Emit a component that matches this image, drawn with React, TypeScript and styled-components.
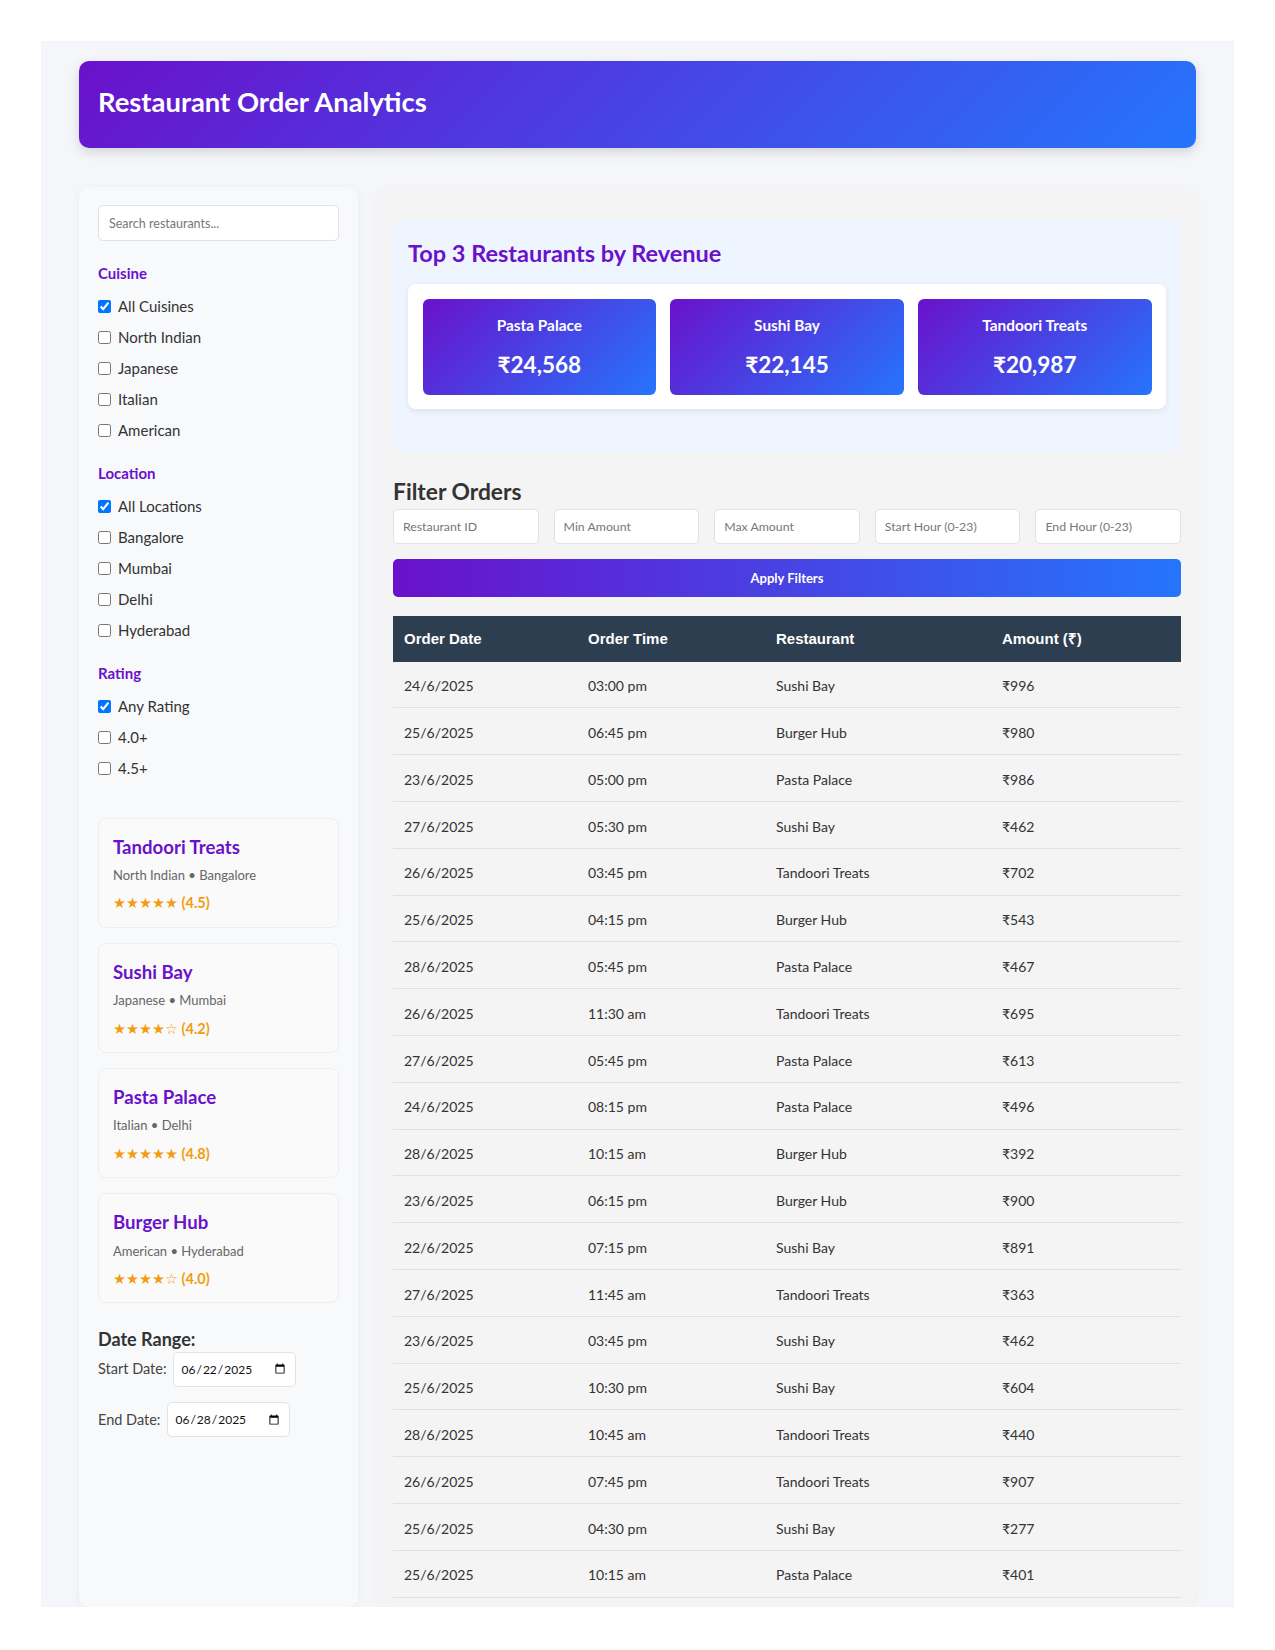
import React from "react";
import styled, { createGlobalStyle } from "styled-components";

const GlobalStyle = createGlobalStyle`
  html, body { margin: 0; padding: 0; background: #ffffff; }
  body { font-family: Lato, "Noto Sans", sans-serif; color: #333; }
  *, *::before, *::after { box-sizing: border-box; }
`;

const Page = styled.div`
  padding: 41px;
`;

const Shell = styled.div`
  height: 1566px;
  background: #f4f6f9;
  padding: 20px 38px 0;
  display: flex;
  flex-direction: column;
  overflow: hidden;
`;

const Header = styled.header`
  flex-shrink: 0;
  height: 87px;
  border-radius: 10px;
  background: linear-gradient(135deg, #6a11cb 0%, #2575fc 100%);
  box-shadow: 0 4px 12px rgba(0, 0, 0, 0.14);
  display: flex;
  align-items: center;
  padding: 0 19px;
`;

const Title = styled.h1`
  margin: 0 0 5px;
  color: #fff;
  font: 700 27.4px/1.2 Lato, "Noto Sans", sans-serif;
`;

const Body = styled.div`
  flex: 1;
  min-height: 0;
  display: flex;
  gap: 20px;
  margin-top: 39px;
`;

const Sidebar = styled.aside`
  width: 279px;
  flex-shrink: 0;
  background: #f8f9fb;
  border-radius: 10px;
  padding: 18px 19px;
  box-shadow: 0 2px 8px rgba(0, 0, 0, 0.05);
`;

const SearchInput = styled.input`
  display: block;
  width: 100%;
  height: 36px;
  padding: 0 10px;
  border: 1px solid #e2e2e2;
  border-radius: 5px;
  background: #fff;
  font: 12.5px Lato, sans-serif;
  margin-bottom: 22px;
  &::placeholder { color: #777; }
`;

const Group = styled.div`
  display: flex;
  flex-direction: column;
  padding-bottom: 12px;
`;

const GroupTitle = styled.h3`
  margin: 0 0 13px;
  font: 700 15px/20px Lato, sans-serif;
  color: #6a11cb;
`;

const CheckRow = styled.label`
  display: flex;
  align-items: center;
  height: 20px;
  margin-bottom: 11px;
  font: 15px/20px Lato, sans-serif;
  color: #333;
`;

const Check = styled.input`
  margin: 0 7px 0 0;
  width: 13px;
  height: 13px;
`;

const RestaurantList = styled.div`
  display: flex;
  flex-direction: column;
  gap: 15px;
  margin-top: 16.5px;
`;

const RCard = styled.div`
  background: #fafafa;
  border: 1px solid #eeeeee;
  border-radius: 8px;
  padding: 15px 14px 12.3px;
`;

const RName = styled.h4`
  margin: 0 0 5.5px;
  font: 700 18.6px/27px Lato, sans-serif;
  color: #6a11cb;
`;

const RMeta = styled.div`
  font: 13px/19px Lato, sans-serif;
  color: #666;
  margin-bottom: 7.4px;
`;

const RStars = styled.div`
  font: 700 14.5px/21px Lato, sans-serif;
  color: #f39c12;
`;

const StarGlyphs = styled.span`
  font-family: "DejaVu Sans", sans-serif;
  font-weight: 400;
  font-size: 14.5px;
`;

const DateSection = styled.div`
  margin-top: 24.5px;
`;

const DateTitle = styled.h3`
  margin: 0 0 2px;
  font: 700 18px/22px Lato, sans-serif;
  color: #333;
`;

const DateRow = styled.div`
  display: flex;
  align-items: center;
  margin-bottom: 15.4px;
`;

const DateLabel = styled.label`
  font: 14.5px/20px Lato, sans-serif;
  color: #444;
  margin-right: 6px;
`;

const DateInput = styled.input`
  width: 123px;
  height: 35px;
  padding: 0 7px;
  border: 1px solid #e2e2e2;
  border-radius: 5px;
  background: #fff;
  font: 12px Lato, sans-serif;
  color: #111;
`;

const Main = styled.main`
  flex: 1;
  min-width: 0;
  background: #f4f4f4;
  border-radius: 10px;
  padding: 32px 15px 0;
  box-shadow: 0 2px 8px rgba(0, 0, 0, 0.04);
  overflow: hidden;
`;

const TopSection = styled.section`
  background: #eef5fe;
  border-radius: 10px;
  padding: 18px 15px 44px;
`;

const TopTitle = styled.h2`
  margin: 0 0 15px;
  font: 700 23.5px/32px Lato, sans-serif;
  color: #6a11cb;
`;

const TopBox = styled.div`
  background: #fff;
  border-radius: 8px;
  padding: 14.5px;
  display: grid;
  grid-template-columns: repeat(3, 1fr);
  gap: 14px;
  box-shadow: 0 2px 6px rgba(0, 0, 0, 0.08);
`;

const TopCard = styled.div`
  height: 96px;
  border-radius: 6px;
  background: linear-gradient(135deg, #6a11cb 0%, #2575fc 100%);
  color: #fff;
  text-align: center;
  padding: 16px 10px 0;
`;

const TopName = styled.div`
  font: 700 15.4px/20px Lato, sans-serif;
  margin-bottom: 14.5px;
`;

const TopValue = styled.div`
  font: 700 22.5px/32px Lato, "Noto Sans", sans-serif;
`;

const FilterTitle = styled.h2`
  margin: 24.4px 0 3.3px;
  font: 700 22.8px/28px Lato, sans-serif;
  color: #333;
`;

const FilterGrid = styled.div`
  display: grid;
  grid-template-columns: repeat(5, 1fr);
  gap: 15px;
`;

const FilterInput = styled.input`
  width: 100%;
  height: 35.3px;
  padding: 0 9px;
  border: 1px solid #e2e2e2;
  border-radius: 5px;
  background: #fff;
  font: 12.3px Lato, sans-serif;
  &::placeholder { color: #777; }
`;

const ApplyButton = styled.button`
  display: block;
  width: 100%;
  height: 38.7px;
  margin-top: 14.7px;
  border: none;
  border-radius: 5px;
  background: linear-gradient(90deg, #6a11cb 0%, #2575fc 100%);
  color: #fff;
  font: 700 13px Lato, sans-serif;
`;

const Table = styled.table`
  width: 100%;
  margin-top: 18.3px;
  border-collapse: collapse;
  table-layout: fixed;
`;

const Th = styled.th<{ $w?: number }>`
  width: ${(p) => (p.$w ? `${p.$w}px` : "auto")};
  background: #2c3e50;
  color: #fff;
  text-align: left;
  padding: 12px 11px;
  font: 700 15px/22px "Liberation Sans", Arial, sans-serif;
`;

const Td = styled.td`
  padding: 13.5px 11px 10.5px;
  font: 14px/21.8px Lato, "Noto Sans", sans-serif;
  color: #333;
  border-bottom: 1px solid #e0e0e0;
`;

const cuisines = ["All Cuisines", "North Indian", "Japanese", "Italian", "American"];
const locations = ["All Locations", "Bangalore", "Mumbai", "Delhi", "Hyderabad"];
const ratings = ["Any Rating", "4.0+", "4.5+"];

const restaurants = [
  { name: "Tandoori Treats", meta: "North Indian • Bangalore", stars: "★★★★★", rating: "4.5" },
  { name: "Sushi Bay", meta: "Japanese • Mumbai", stars: "★★★★☆", rating: "4.2" },
  { name: "Pasta Palace", meta: "Italian • Delhi", stars: "★★★★★", rating: "4.8" },
  { name: "Burger Hub", meta: "American • Hyderabad", stars: "★★★★☆", rating: "4.0" },
];

const top3 = [
  { name: "Pasta Palace", value: "₹24,568" },
  { name: "Sushi Bay", value: "₹22,145" },
  { name: "Tandoori Treats", value: "₹20,987" },
];

const orders: [string, string, string, string][] = [
  ["24/6/2025", "03:00 pm", "Sushi Bay", "₹996"],
  ["25/6/2025", "06:45 pm", "Burger Hub", "₹980"],
  ["23/6/2025", "05:00 pm", "Pasta Palace", "₹986"],
  ["27/6/2025", "05:30 pm", "Sushi Bay", "₹462"],
  ["26/6/2025", "03:45 pm", "Tandoori Treats", "₹702"],
  ["25/6/2025", "04:15 pm", "Burger Hub", "₹543"],
  ["28/6/2025", "05:45 pm", "Pasta Palace", "₹467"],
  ["26/6/2025", "11:30 am", "Tandoori Treats", "₹695"],
  ["27/6/2025", "05:45 pm", "Pasta Palace", "₹613"],
  ["24/6/2025", "08:15 pm", "Pasta Palace", "₹496"],
  ["28/6/2025", "10:15 am", "Burger Hub", "₹392"],
  ["23/6/2025", "06:15 pm", "Burger Hub", "₹900"],
  ["22/6/2025", "07:15 pm", "Sushi Bay", "₹891"],
  ["27/6/2025", "11:45 am", "Tandoori Treats", "₹363"],
  ["23/6/2025", "03:45 pm", "Sushi Bay", "₹462"],
  ["25/6/2025", "10:30 pm", "Sushi Bay", "₹604"],
  ["28/6/2025", "10:45 am", "Tandoori Treats", "₹440"],
  ["26/6/2025", "07:45 pm", "Tandoori Treats", "₹907"],
  ["25/6/2025", "04:30 pm", "Sushi Bay", "₹277"],
  ["25/6/2025", "10:15 am", "Pasta Palace", "₹401"],
];

function CheckGroup({ title, items }: { title: string; items: string[] }) {
  return (
    <Group>
      <GroupTitle>{title}</GroupTitle>
      {items.map((it, i) => (
        <CheckRow key={it}>
          <Check type="checkbox" defaultChecked={i === 0} />
          {it}
        </CheckRow>
      ))}
    </Group>
  );
}

export default function App() {
  return (
    <>
      <GlobalStyle />
      <Page>
        <Shell>
          <Header>
            <Title>Restaurant Order Analytics</Title>
          </Header>
          <Body>
            <Sidebar>
              <SearchInput placeholder="Search restaurants..." />
              <CheckGroup title="Cuisine" items={cuisines} />
              <CheckGroup title="Location" items={locations} />
              <CheckGroup title="Rating" items={ratings} />
              <RestaurantList>
                {restaurants.map((r) => (
                  <RCard key={r.name}>
                    <RName>{r.name}</RName>
                    <RMeta>{r.meta}</RMeta>
                    <RStars>
                      <StarGlyphs>{r.stars}</StarGlyphs> ({r.rating})
                    </RStars>
                  </RCard>
                ))}
              </RestaurantList>
              <DateSection>
                <DateTitle>Date Range:</DateTitle>
                <DateRow>
                  <DateLabel>Start Date:</DateLabel>
                  <DateInput type="date" defaultValue="2025-06-22" />
                </DateRow>
                <DateRow>
                  <DateLabel>End Date:</DateLabel>
                  <DateInput type="date" defaultValue="2025-06-28" />
                </DateRow>
              </DateSection>
            </Sidebar>
            <Main>
              <TopSection>
                <TopTitle>Top 3 Restaurants by Revenue</TopTitle>
                <TopBox>
                  {top3.map((t) => (
                    <TopCard key={t.name}>
                      <TopName>{t.name}</TopName>
                      <TopValue>{t.value}</TopValue>
                    </TopCard>
                  ))}
                </TopBox>
              </TopSection>
              <FilterTitle>Filter Orders</FilterTitle>
              <FilterGrid>
                <FilterInput placeholder="Restaurant ID" />
                <FilterInput placeholder="Min Amount" />
                <FilterInput placeholder="Max Amount" />
                <FilterInput placeholder="Start Hour (0-23)" />
                <FilterInput placeholder="End Hour (0-23)" />
              </FilterGrid>
              <ApplyButton>Apply Filters</ApplyButton>
              <Table>
                <thead>
                  <tr>
                    <Th $w={184}>Order Date</Th>
                    <Th $w={188}>Order Time</Th>
                    <Th $w={226}>Restaurant</Th>
                    <Th>Amount (₹)</Th>
                  </tr>
                </thead>
                <tbody>
                  {orders.map((o, i) => (
                    <tr key={i}>
                      <Td>{o[0]}</Td>
                      <Td>{o[1]}</Td>
                      <Td>{o[2]}</Td>
                      <Td>{o[3]}</Td>
                    </tr>
                  ))}
                </tbody>
              </Table>
            </Main>
          </Body>
        </Shell>
      </Page>
    </>
  );
}
